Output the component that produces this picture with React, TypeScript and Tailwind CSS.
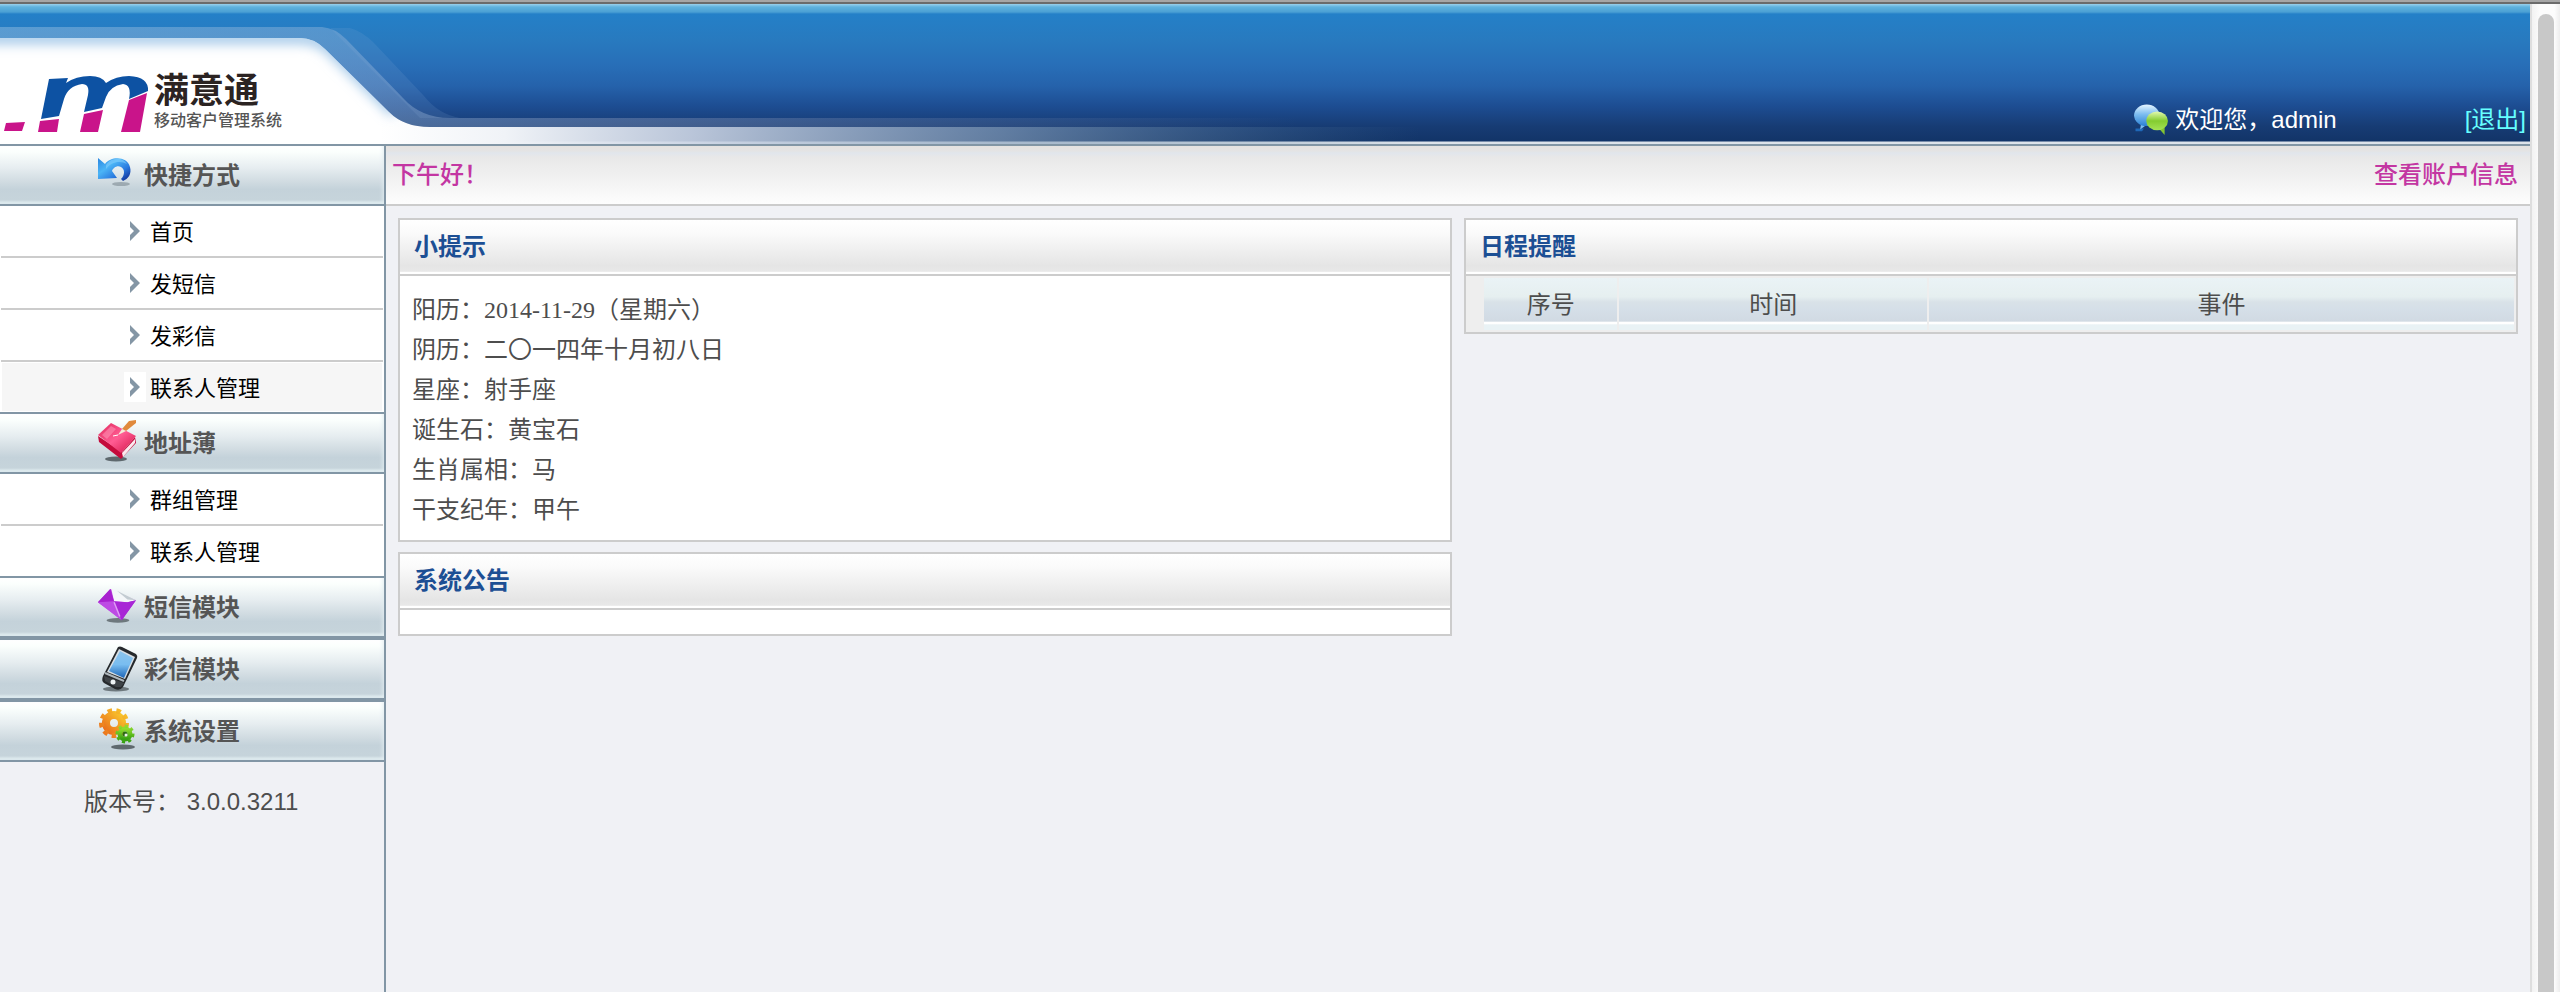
import type { ReactNode } from "react";

const sans = "font-['Liberation_Sans','Noto_Sans_CJK_SC',sans-serif]";
const serif = "font-['Liberation_Serif','Noto_Sans_CJK_SC',serif]";

function ShortcutIcon() {
  return (
    <svg viewBox="0 0 40 48" className="h-12 w-10 shrink-0" aria-hidden="true">
      <defs>
        <linearGradient id="undo" x1="0" y1="0" x2="1" y2="1">
          <stop offset="0" stopColor="#2a86e0" />
          <stop offset="0.35" stopColor="#4bb4f6" />
          <stop offset="0.65" stopColor="#2b7be0" />
          <stop offset="1" stopColor="#0a1f86" />
        </linearGradient>
      </defs>
      <ellipse cx="25" cy="33" rx="9" ry="2" fill="#7d8b93" opacity="0.6" />
      <path
        d="M2 7 L9 13 C15 5 31 5 34 16 C36 23 32 28 27 30 L25 28 C29 24 29 18 25 16 C21 14 17 17 16 20 L21 27 L2 28 Z"
        fill="url(#undo)"
      />
      <path d="M10 14 C15 6 27 6 31 13 C24 9 15 11 10 18 Z" fill="#8fd6ff" opacity="0.5" />
    </svg>
  );
}

function BookIcon() {
  return (
    <svg viewBox="0 0 40 48" className="h-12 w-10 shrink-0" aria-hidden="true">
      <defs>
        <linearGradient id="book" x1="0" y1="0" x2="1" y2="1">
          <stop offset="0" stopColor="#e02a5c" />
          <stop offset="0.5" stopColor="#ff5c93" />
          <stop offset="1" stopColor="#d40f45" />
        </linearGradient>
      </defs>
      <ellipse cx="20" cy="40" rx="11" ry="2.5" fill="#333c40" opacity="0.7" />
      <path d="M2 17 L3 23 L25 40 L40 24 L39 18 L26 33 Z" fill="#c40b3c" />
      <path d="M26 34 L39 20 L39 24 L27 38 Z" fill="#fbe9ee" />
      <path d="M2 16 L15 4 L40 17 L25 34 Z" fill="url(#book)" />
      <path d="M6 16 L15 7 L20 10 L11 20 Z" fill="#ff9dbd" opacity="0.5" />
      <path d="M33 2 L40 1 L40 4 L30 12 L26 10 Z" fill="#e08a3c" />
      <path d="M26 10 L30 12 L22 16 Z" fill="#f6ead8" />
      <path d="M22 16 L17 17" stroke="#fff" strokeWidth="1" />
    </svg>
  );
}

function EnvelopeIcon() {
  return (
    <svg viewBox="0 0 42 48" className="h-12 w-10 shrink-0 overflow-visible" aria-hidden="true">
      <defs>
        <linearGradient id="mail" x1="0" y1="0" x2="1" y2="1">
          <stop offset="0" stopColor="#a623cf" />
          <stop offset="0.5" stopColor="#cf63ef" />
          <stop offset="1" stopColor="#8d12b8" />
        </linearGradient>
      </defs>
      <ellipse cx="23" cy="38" rx="12" ry="2.5" fill="#333c40" opacity="0.6" />
      <path d="M2 19 L15 5 L42 17 L27 38 Z" fill="url(#mail)" />
      <path d="M16 5 L22 7 L42 17 L33 19 L19 18 Z" fill="#f4f7f9" />
      <path d="M22 7 L42 17 L33 16 Z" fill="#c3ccd2" />
      <path d="M2 19 L19 18 L27 38 Z" fill="#bd4be4" />
      <path d="M19 18 L33 19 L42 17 L27 38 Z" fill="#a826d6" />
      <path d="M2 19 L15 5 L19 18 Z" fill="#a821cf" />
      <path d="M19 19 L25 34" stroke="#df9df5" strokeWidth="1.5" />
    </svg>
  );
}

function PhoneIcon() {
  return (
    <svg viewBox="0 0 40 48" className="h-12 w-10 shrink-0 overflow-visible" aria-hidden="true">
      <defs>
        <linearGradient id="screen" x1="0" y1="0" x2="0" y2="1">
          <stop offset="0" stopColor="#8cc4ec" />
          <stop offset="0.5" stopColor="#79bdf0" />
          <stop offset="1" stopColor="#1d66b8" />
        </linearGradient>
      </defs>
      <ellipse cx="20" cy="44" rx="13" ry="2.5" fill="#333c40" opacity="0.6" />
      <path d="M22 2 Q24 1 26 2 L40 9 Q42 11 41 13 L27 42 Q24 46 19 44 L8 38 Q5 36 7 31 Z" fill="#26292c" />
      <path d="M23 4 L39 12 L29 34 L11 27 Z" fill="#d7dee3" />
      <path d="M24 6 L37 13 L28 33 L13 26 Z" fill="url(#screen)" />
      <path d="M8 31 L28 38 L25 42 L20 42 L9 36 Z" fill="#3f4448" />
      <circle cx="17" cy="37" r="2.5" fill="#eef2f4" />
      <path d="M9 28 L28 36" stroke="#aeb7bd" strokeWidth="2" />
    </svg>
  );
}

function GearsIcon() {
  return (
    <svg viewBox="0 0 40 48" className="h-12 w-10 shrink-0" aria-hidden="true">
      <defs>
        <linearGradient id="gearA" x1="1" y1="0" x2="0" y2="1">
          <stop offset="0" stopColor="#f8c52c" />
          <stop offset="1" stopColor="#ea6f1b" />
        </linearGradient>
        <linearGradient id="gearB" x1="0" y1="0" x2="0" y2="1">
          <stop offset="0" stopColor="#8fdc2e" />
          <stop offset="1" stopColor="#36a012" />
        </linearGradient>
      </defs>
      <ellipse cx="27" cy="40" rx="12" ry="2.5" fill="#333c40" opacity="0.7" />
      <circle cx="18" cy="16" r="8" fill="none" stroke="url(#gearA)" strokeWidth="8" />
      <circle cx="18" cy="16" r="12.5" fill="none" stroke="url(#gearA)" strokeWidth="5" strokeDasharray="4.4 4.3" />
      <circle cx="29" cy="27" r="5" fill="none" stroke="url(#gearB)" strokeWidth="5" />
      <circle cx="29" cy="27" r="8" fill="none" stroke="url(#gearB)" strokeWidth="3" strokeDasharray="3.1 3.1" />
      <circle cx="29" cy="27" r="2.5" fill="#2c6b14" />
      <circle cx="30" cy="28" r="1.5" fill="#eef4ea" />
    </svg>
  );
}

function ChatIcon() {
  return (
    <svg viewBox="0 0 37 34" className="h-8 w-9 shrink-0" aria-hidden="true">
      <defs>
        <linearGradient id="bubbleBlue" x1="0" y1="0" x2="0" y2="1">
          <stop offset="0" stopColor="#e6f5ff" />
          <stop offset="0.45" stopColor="#7dbdf0" />
          <stop offset="1" stopColor="#2a80d4" />
        </linearGradient>
        <linearGradient id="bubbleGreen" x1="0" y1="0" x2="0" y2="1">
          <stop offset="0" stopColor="#e2f9b0" />
          <stop offset="0.5" stopColor="#84cc30" />
          <stop offset="1" stopColor="#a5e356" />
        </linearGradient>
      </defs>
      <path d="M2 26 h9 l-2 3 h-7 Z" fill="#1f68b8" />
      <path d="M8 20 L7 27 L14 22 Z" fill="#7dbdf0" />
      <ellipse cx="14" cy="12" rx="13.5" ry="11.5" fill="url(#bubbleBlue)" />
      <path d="M26 25 L33 33 L33 25 Z" fill="#84c433" />
      <ellipse cx="25" cy="18" rx="11.5" ry="10" fill="url(#bubbleGreen)" />
    </svg>
  );
}

function LogoMark() {
  return (
    <svg viewBox="0 70 150 62" className="h-[62px] w-[150px] shrink-0" aria-hidden="true">
      <path
        d="M49 77 L68 76 L66 81 Q76 74 90 74 Q102 74 106 81 Q116 74 129 74 Q149 75 148 89 L129 97 Q132 83 123 82 Q110 84 106 95 L102 106 L84 110 L88 93 Q90 82 82 82 Q68 84 64 97 L59 114 L41 117 Z"
        fill="#0d52a3"
      />
      <path
        d="M6 121 L25 120 L22 129 L4 129 Z M40 119 L59 117 L57 130 L38 130 Z M84 112 L103 108 L98 130 L80 130 Z M129 98 L147 91 L140 130 L121 130 Z"
        fill="#c9148a"
      />
    </svg>
  );
}

function HeaderArt() {
  return (
    <svg viewBox="0 4 1500 140" className="absolute top-0 left-0 h-[140px] w-[1500px]" aria-hidden="true">
      <defs>
        <linearGradient id="band" gradientUnits="userSpaceOnUse" x1="0" y1="0" x2="1300" y2="0">
          <stop offset="0" stopColor="#a8cbe8" stopOpacity="0.4" />
          <stop offset="0.28" stopColor="#9bb9dc" stopOpacity="0.4" />
          <stop offset="0.5" stopColor="#a5aeca" stopOpacity="0.32" />
          <stop offset="1" stopColor="#a5aeca" stopOpacity="0" />
        </linearGradient>
        <linearGradient id="sheet" gradientUnits="userSpaceOnUse" x1="380" y1="0" x2="1420" y2="0">
          <stop offset="0" stopColor="#fff" />
          <stop offset="0.12" stopColor="#f0f3f7" />
          <stop offset="0.3" stopColor="#ccd5e5" stopOpacity="0.9" />
          <stop offset="0.6" stopColor="#8aa2bd" stopOpacity="0.65" />
          <stop offset="1" stopColor="#4b7394" stopOpacity="0" />
        </linearGradient>
        <filter id="soft" x="-10%" y="-20%" width="120%" height="140%">
          <feGaussianBlur stdDeviation="6" />
        </filter>
        <clipPath id="sheetClip">
          <path d="M0 38 H300 Q314 38 325 49 L389 112 Q404 127 430 127 V144 H0 Z" />
        </clipPath>
      </defs>
      <path d="M330 28 H350 Q362 31 374 43 L424 96 Q438 114 460 118 H420 Z" fill="#8fb4dc" opacity="0.14" />
      <path
        d="M0 27 H322 Q335 28 346 39 L403 98 Q421 118 450 118 H1300 V127 H430 Q404 127 389 112 L325 49 Q314 38 300 38 H0 Z"
        fill="url(#band)"
      />
      <path d="M0 38 H300 Q314 38 325 49 L389 112 Q404 127 430 127 H1420 V144 H0 Z" fill="url(#sheet)" />
      <g clipPath="url(#sheetClip)">
        <path
          d="M-20 38 H300 Q316 38 328 47 L395 112"
          fill="none"
          stroke="#a3c8e8"
          strokeWidth="12"
          filter="url(#soft)"
        />
      </g>
    </svg>
  );
}

function Chevron() {
  return (
    <svg viewBox="0 0 22 30" className="h-[30px] w-[22px] shrink-0 bg-white" aria-hidden="true">
      <path d="M6 5 L16 15 L6 25 V19 L10 15 L6 11 Z" fill="#8496a5" />
    </svg>
  );
}

type Section = { title: string; icon: ReactNode; links?: string[]; active?: number };

const sections: Section[] = [
  { title: "快捷方式", icon: <ShortcutIcon />, links: ["首页", "发短信", "发彩信", "联系人管理"], active: 3 },
  { title: "地址薄", icon: <BookIcon />, links: ["群组管理", "联系人管理"] },
  { title: "短信模块", icon: <EnvelopeIcon /> },
  { title: "彩信模块", icon: <PhoneIcon /> },
  { title: "系统设置", icon: <GearsIcon /> },
];

function Sidebar() {
  return (
    <aside className={`w-[386px] shrink-0 border-r-2 border-[#8296a5] ${sans}`}>
      <nav>
        {sections.map((s, i) => (
          <div key={s.title}>
            <button
              type="button"
              className={`flex w-full items-center gap-2 border-[#8296a5] bg-[linear-gradient(#ffffff_0%,#fbfffd_10%,#e6edf0_38%,#d0dbe1_62%,#c4d2da_75%,#c6d4db_93%,#dbe8ec_97%)] pl-24 text-left text-2xl font-bold text-[#555] shadow-[inset_-4px_0_4px_-3px_#e3edf1] ${
                i === 0 ? "h-[60px] border-b-2" : "h-[62px] border-y-2"
              }`}
            >
              {s.icon}
              <span className="pt-0.5">{s.title}</span>
            </button>
            {s.links && (
              <ul className="divide-y-2 divide-[#ccc] bg-white px-px">
                {s.links.map((label, n) => (
                  <li key={label} className="p-px">
                    <a
                      href="#"
                      className={`flex h-12 items-center gap-1 pl-[122px] text-[22px] text-black ${
                        n === s.active ? "bg-[#f6f6f6]" : ""
                      }`}
                    >
                      <Chevron />
                      <span className="pt-0.5">{label}</span>
                    </a>
                  </li>
                ))}
              </ul>
            )}
          </div>
        ))}
      </nav>
      <p className="px-[84px] pt-6 text-2xl text-[#4d4d4d]">版本号： 3.0.0.3211</p>
    </aside>
  );
}

function Panel({ title, children }: { title: string; children?: ReactNode }) {
  return (
    <section className="border-2 border-[#ccc] bg-white">
      <h2 className="flex h-14 items-center border-b-2 border-[#ccc] bg-[linear-gradient(#ffffff_0%,#fafafa_25%,#e5e5e5_85%,#e8e8e8_95%,#ffffff_97%)] px-3.5 text-2xl font-bold text-[#1c4f94]">
        {title}
      </h2>
      {children}
    </section>
  );
}

const tips = [
  "阳历：2014-11-29（星期六）",
  "阴历：二〇一四年十月初八日",
  "星座：射手座",
  "诞生石：黄宝石",
  "生肖属相：马",
  "干支纪年：甲午",
];

const th =
  "h-[52px] bg-[linear-gradient(#eaf3f6_0%,#e6eff0_36%,#d9e2e8_46%,#d5dfe8_60%,#d1dae3_83%,#ffffff_85%,#ffffff_88%,#e9f2f5_90%)] p-0 pt-0.5 text-2xl font-normal";

export default function App() {
  return (
    <div className="flex min-h-screen flex-col bg-[#f0f1f5] text-[#4d4d4d]">
      <div className="h-1 bg-[linear-gradient(#a6a6a6_50%,#6b6b6b_50%)]" />
      <div className="flex flex-1">
        <div className="flex min-w-0 flex-1 flex-col">
          <header
            className={`relative flex h-[142px] items-end justify-between overflow-hidden border-b-2 border-[#8296a5] bg-[linear-gradient(#9ad0ec_0px,#5fb2de_3px,#4ba0d4_8px,#2480c8_10px,#287abf_36px,#286fb8_60px,#2562ab_82px,#1d4d92_102px,#173c74_122px,#123468_137px,#dde3ea_138px,#dde3ea_140px)] ${sans}`}
          >
            <HeaderArt />
            <h1 className="relative flex items-center gap-1 pb-2.5">
              <LogoMark />
              <span className="flex flex-col text-[#2b2322]">
                <span className="text-[35px] leading-9 font-bold">满意通</span>
                <span className="text-base leading-6 font-medium text-[#555]">移动客户管理系统</span>
              </span>
            </h1>
            <div className="relative flex items-center gap-32 pr-1 pb-2 text-2xl">
              <span className="flex items-center gap-1.5 text-white">
                <ChatIcon />
                欢迎您，admin
              </span>
              <a href="#" className="text-[#66ffff]">
                [退出]
              </a>
            </div>
          </header>
          <div className="flex flex-1">
            <Sidebar />
            <main className={`min-w-0 flex-1 ${serif}`}>
              <div className="flex h-[60px] items-center justify-between border-b-2 border-[#ccc] bg-[linear-gradient(#e5e2e0_0px,#e4e4e4_5px,#e1e6ec_7px,#e8e8e8_11px,#f3f3f3_36px,#fdfdfd_57px)] pr-3 pl-1.5 text-2xl font-medium text-[#c336a2]">
                <span>下午好！</span>
                <a href="#">查看账户信息</a>
              </div>
              <div className="grid grid-cols-2 items-start gap-3 p-3">
                <div className="grid gap-2.5">
                  <Panel title="小提示">
                    <ul className="px-3 pt-3.5 pb-2.5 text-2xl leading-10">
                      {tips.map((t) => (
                        <li key={t}>{t}</li>
                      ))}
                    </ul>
                  </Panel>
                  <Panel title="系统公告">
                    <div className="h-6" />
                  </Panel>
                </div>
                <Panel title="日程提醒">
                  <div className="bg-[#eee] pl-4">
                    <table className="w-full table-fixed border-separate border-spacing-0.5">
                      <thead>
                        <tr>
                          <th className={`w-[13%] ${th}`}>序号</th>
                          <th className={`w-[30%] ${th}`}>时间</th>
                          <th className={th}>事件</th>
                        </tr>
                      </thead>
                    </table>
                  </div>
                </Panel>
              </div>
            </main>
          </div>
        </div>
        <div className="flex w-[30px] shrink-0 border-l-2 border-[#dedede] bg-[linear-gradient(90deg,#f2f2f2,#fcfcfc_30%,#fcfcfc_80%,#ededed)] pt-2.5 pl-1.5">
          <div className="w-4 rounded-t-full bg-[#c8c8c8]" />
        </div>
      </div>
    </div>
  );
}
